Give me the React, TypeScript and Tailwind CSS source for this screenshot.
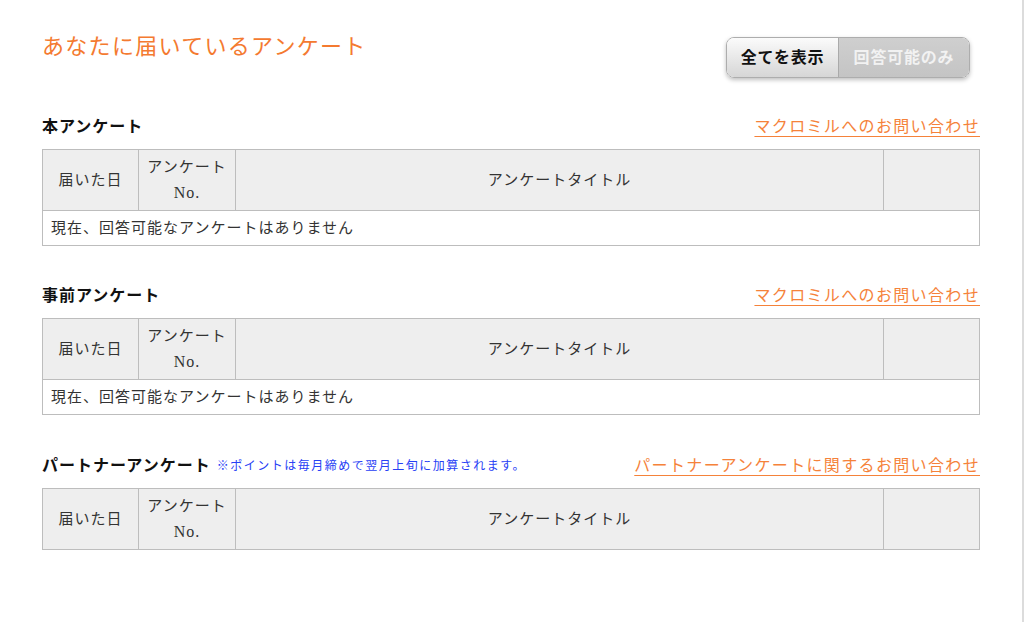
import React from 'react';

const FONT = "font-['Liberation_Serif','Noto_Sans_CJK_JP',serif]";

interface SectionProps {
  title: string;
  note?: string;
  linkText: string;
  showEmpty: boolean;
  className?: string;
}

const SurveyTable: React.FC<{ showEmpty: boolean }> = ({ showEmpty }) => (
  <table className="w-full table-fixed border-collapse border border-[#bdbdbd] text-[15px] tracking-[1px] text-[#333]">
    <colgroup>
      <col className="w-[96px]" />
      <col className="w-[97px]" />
      <col />
      <col className="w-[96px]" />
    </colgroup>
    <thead>
      <tr className="h-[61px] bg-[#eeeeee]">
        <th className="border border-[#bdbdbd] font-normal">届いた日</th>
        <th className="border border-[#bdbdbd] font-normal leading-[25px]">
          アンケート
          <br />
          <span className="text-[16px]">No.</span>
        </th>
        <th className="border border-[#bdbdbd] font-normal">アンケートタイトル</th>
        <th className="border border-[#bdbdbd] font-normal"></th>
      </tr>
    </thead>
    {showEmpty && (
      <tbody>
        <tr className="h-[35px]">
          <td colSpan={4} className="border border-[#bdbdbd] px-[8px] text-left">
            現在、回答可能なアンケートはありません
          </td>
        </tr>
      </tbody>
    )}
  </table>
);

const Section: React.FC<SectionProps> = ({ title, note, linkText, showEmpty, className }) => (
  <section className={className}>
    <div className="flex h-[24px] items-center justify-between">
      <div className="flex items-center">
        <h2 className="text-[16px] font-bold tracking-[1px] text-[#111]">{title}</h2>
        {note && <span className="ml-[6px] text-[12px] tracking-[1.5px] text-[#2740f5]">{note}</span>}
      </div>
      <a href="#" className="text-[16px] tracking-[1.35px] text-[#f5823a] underline underline-offset-[4px]">
        {linkText}
      </a>
    </div>
    <div className="mt-[10px]">
      <SurveyTable showEmpty={showEmpty} />
    </div>
  </section>
);

export default function App() {
  return (
    <div className={`min-h-screen w-full bg-white ${FONT}`}>
      <div className="min-h-screen w-[1024px] border-r-2 border-[#dcdcdc]">
        <div className="w-[980px] pl-[42px]">
          <header className="flex items-start justify-between pt-[32px]">
            <h1 className="text-[22px] leading-[30px] tracking-[1.3px] text-[#f47a30]">
              あなたに届いているアンケート
            </h1>
            <div className="mt-[5px] mr-[10px] flex h-[41px] overflow-hidden rounded-[8px] border border-[#adadad] text-[16px] font-bold tracking-[0.8px] shadow-[0_2px_4px_rgba(0,0,0,0.25)]">
              <button className="w-[112px] border-r border-[#aaaaaa] bg-gradient-to-b from-[#fbfbfb] to-[#d6d6d6] text-[#111]">
                全てを表示
              </button>
              <button className="w-[130px] bg-gradient-to-b from-[#cfcfcf] to-[#c4c4c4] text-[#f2f2f2]">
                回答可能のみ
              </button>
            </div>
          </header>

          <Section className="mt-[37px]" title="本アンケート" linkText="マクロミルへのお問い合わせ" showEmpty />
          <Section className="mt-[38px]" title="事前アンケート" linkText="マクロミルへのお問い合わせ" showEmpty />
          <Section
            className="mt-[39px]"
            title="パートナーアンケート"
            note="※ポイントは毎月締めで翌月上旬に加算されます。"
            linkText="パートナーアンケートに関するお問い合わせ"
            showEmpty={false}
          />
        </div>
      </div>
    </div>
  );
}
